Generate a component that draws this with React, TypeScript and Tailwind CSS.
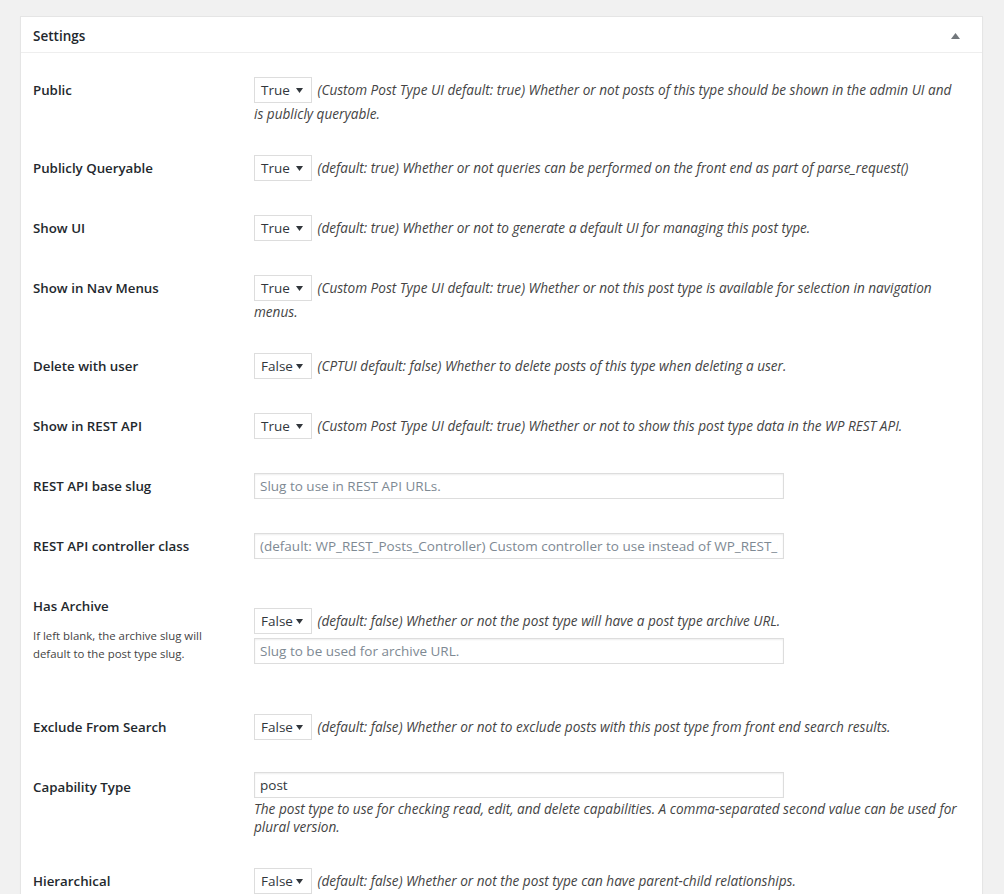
import React from 'react'

const Caret = () => (
  <svg width="7" height="5" viewBox="0 0 7 5" className="shrink-0">
    <path d="M0 0h7L3.5 5z" fill="#32373c" />
  </svg>
)

function Select({ value }: { value: string }) {
  return (
    <span className="mr-[2px] inline-flex h-[26px] w-[58px] -my-px items-center justify-between border border-[#ddd] bg-white pl-[6px] pr-[8px] align-top text-[13.5px] leading-[24px] not-italic text-[#32373c]">
      <span>{value}</span>
      <Caret />
    </span>
  )
}

function TextInput({ placeholder, value }: { placeholder?: string; value?: string }) {
  return (
    <input
      readOnly
      placeholder={placeholder}
      defaultValue={value}
      className="-my-px h-[26px] w-[530px] border border-[#ddd] bg-white px-[5px] align-top text-[13.5px] not-italic text-[#32373c] shadow-[inset_0_1px_2px_rgba(0,0,0,0.07)] outline-none placeholder:text-[#7e8993]"
    />
  )
}

function Label({ children, sub }: { children: React.ReactNode; sub?: React.ReactNode }) {
  return (
    <div className="w-[221px] shrink-0 py-[20px] pr-[10px]">
      <div className="text-[13.3px] font-semibold leading-[20px] text-[#23282d]">{children}</div>
      {sub && <div className="mt-[11px] w-[185px] text-[11.4px] leading-[18px] text-[#444]">{sub}</div>}
    </div>
  )
}

function SelectRow({ label, value, desc }: { label: string; value: string; desc: string }) {
  return (
    <div className="flex">
      <Label>{label}</Label>
      <div className="flex-1 pt-[18px] pb-[12px] pr-[10px] text-[13.6px] italic leading-[24px] text-[#444]">
        <Select value={value} /> <span>{desc}</span>
      </div>
    </div>
  )
}

function InputRow({ label, placeholder }: { label: string; placeholder: string }) {
  return (
    <div className="flex">
      <Label>{label}</Label>
      <div className="flex-1 pt-[18px] pb-[12px] pr-[10px] leading-[24px]">
        <TextInput placeholder={placeholder} />
      </div>
    </div>
  )
}

export default function App() {
  return (
    <div className="min-h-screen bg-[#f1f1f1] px-[20px] pt-[16px] font-['Segoe_UI','Open_Sans',sans-serif]">
      <div className="w-[963px] border border-[#e5e5e5] bg-white shadow-[0_1px_1px_rgba(0,0,0,0.04)]">
        <div className="flex h-[36px] items-center justify-between border-b border-[#eee] pt-[3px] pl-[12px] pr-[22px]">
          <h2 className="text-[13.5px] font-semibold text-[#23282d]">Settings</h2>
          <svg width="9" height="6" viewBox="0 0 9 6">
            <path d="M0 6h9L4.5 0z" fill="#72777c" />
          </svg>
        </div>
        <div className="px-[12px] pt-[7px] pb-[12px]">
          <SelectRow
            label="Public"
            value="True"
            desc="(Custom Post Type UI default: true) Whether or not posts of this type should be shown in the admin UI and is publicly queryable."
          />
          <SelectRow
            label="Publicly Queryable"
            value="True"
            desc="(default: true) Whether or not queries can be performed on the front end as part of parse_request()"
          />
          <SelectRow
            label="Show UI"
            value="True"
            desc="(default: true) Whether or not to generate a default UI for managing this post type."
          />
          <SelectRow
            label="Show in Nav Menus"
            value="True"
            desc="(Custom Post Type UI default: true) Whether or not this post type is available for selection in navigation menus."
          />
          <SelectRow
            label="Delete with user"
            value="False"
            desc="(CPTUI default: false) Whether to delete posts of this type when deleting a user."
          />
          <SelectRow
            label="Show in REST API"
            value="True"
            desc="(Custom Post Type UI default: true) Whether or not to show this post type data in the WP REST API."
          />
          <InputRow label="REST API base slug" placeholder="Slug to use in REST API URLs." />
          <InputRow
            label="REST API controller class"
            placeholder="(default: WP_REST_Posts_Controller) Custom controller to use instead of WP_REST_Posts_Controller."
          />
          <div className="flex">
            <Label sub={<>If left blank, the archive slug will default to the post type slug.</>}>Has Archive</Label>
            <div className="flex-1 pt-[33px] pb-[34px] pr-[10px] text-[13.6px] italic leading-[24px] text-[#444]">
              <div>
                <Select value="False" />{' '}
                <span>(default: false) Whether or not the post type will have a post type archive URL.</span>
              </div>
              <div className="mt-[6px]">
                <TextInput placeholder="Slug to be used for archive URL." />
              </div>
            </div>
          </div>
          <SelectRow
            label="Exclude From Search"
            value="False"
            desc="(default: false) Whether or not to exclude posts with this post type from front end search results."
          />
          <div className="flex">
            <Label>Capability Type</Label>
            <div className="flex-1 pt-[16px] pb-[15px] pr-[10px] leading-[24px]">
              <TextInput value="post" />
              <p className="mt-[3px] text-[13.6px] italic leading-[18px] text-[#444]">
                The post type to use for checking read, edit, and delete capabilities. A comma-separated second value can be used for plural version.
              </p>
            </div>
          </div>
          <SelectRow
            label="Hierarchical"
            value="False"
            desc="(default: false) Whether or not the post type can have parent-child relationships."
          />
        </div>
      </div>
    </div>
  )
}
